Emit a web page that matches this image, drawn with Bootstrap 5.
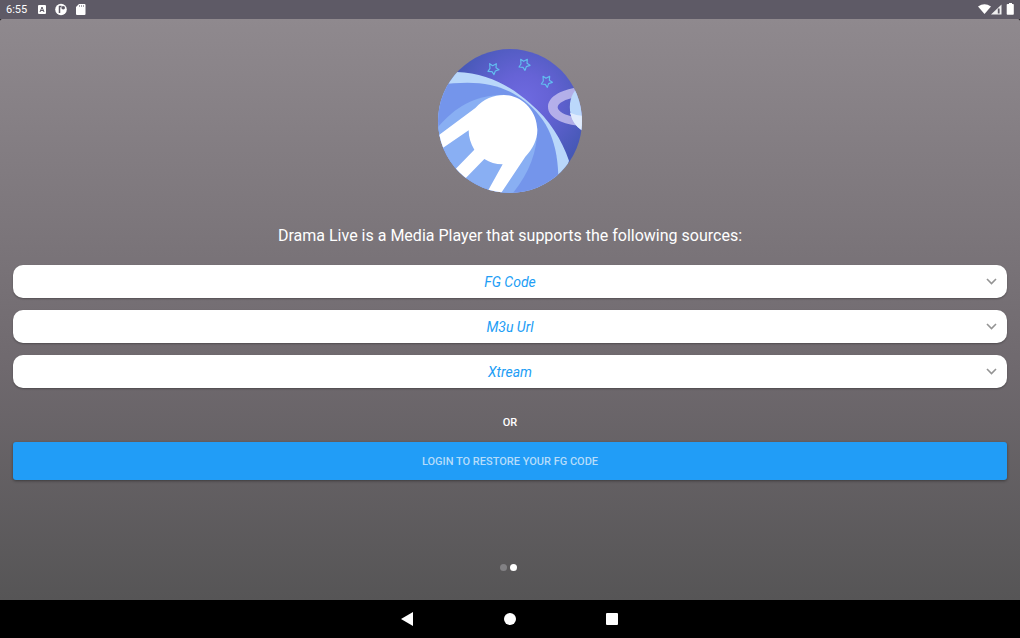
<!DOCTYPE html>
<html lang="en">
<head>
<meta charset="utf-8">
<meta name="viewport" content="width=device-width, initial-scale=1">
<title>Drama Live</title>
<link href="https://cdn.jsdelivr.net/npm/bootstrap@5.3.0/dist/css/bootstrap.min.css" rel="stylesheet">
<style>
  body { font-family: Roboto, "Liberation Sans", sans-serif; background: #000; }
  .status-bar { height: 19px; background: #5e5a66; font-size: 11px; line-height: 19px; padding: 0 5px 0 6px; }
  .screen {
    background: linear-gradient(#8f898e 0%, #6f696e 60%, #565556 100%);
    border-radius: 2px 2px 0 0;
    padding: 30px 13px 29px;
  }
  .app-logo { width: 144px; height: 144px; }
  .intro { font-size: 16px; line-height: 24px; margin: 31px 0 17px; }
  .sources { gap: 12px; }
  .source-btn {
    height: 33px; border-radius: 10px; background: #fff;
    font-size: 14px; line-height: 20px; font-style: italic; padding: 0 10px;
    box-shadow: 0 1px 2px rgba(0,0,0,.3);
    --bs-btn-color: #219df5; --bs-btn-hover-color: #1584d6; --bs-btn-hover-bg: #fff;
  }
  .source-btn svg { right: 10px; top: 10px; }
  .or-line { font-size: 11px; line-height: 16px; font-weight: 500; margin: 27px 0 11px; }
  .login-btn {
    height: 38px; border-radius: 3px; background: #219df7; color: #b5dcfa;
    font-size: 11px; line-height: 16px; font-weight: 500; padding: 2px 12px 0;
    box-shadow: 0 1px 3px rgba(0,0,0,.4);
  }
  .login-btn:hover { background: #1c90e6; color: #fff; }
  .page-dot { width: 7px; height: 7px; margin-right: 3px; background: #828184; }
  .page-dot.is-current { background: #fff; }
  .system-nav { height: 38px; gap: 82px; }
  .system-nav button { width: 20px; height: 20px; }
</style>
</head>
<body class="d-flex flex-column min-vh-100 text-white">

<header class="status-bar d-flex align-items-center justify-content-between">
  <div class="d-flex align-items-center">
    <span>6:55</span>
    <svg class="ms-2" width="52" height="13" viewBox="0 0 52 13" aria-hidden="true">
      <rect x="3" y="2" width="8" height="9" rx="1" fill="#fff"/>
      <path d="M5 9l2-5 2 5M5.700 7.500h2.600" fill="none" stroke="#5e5a66" stroke-width="1"/>
      <circle cx="26" cy="6.500" r="5.800" fill="#fff"/>
      <path d="M24.500 3v7M24 3.500h2.500" fill="none" stroke="#5e5a66" stroke-width="1.500"/>
      <circle cx="28.200" cy="4.800" r="1.800" fill="#5e5a66"/>
      <path d="M44 1h5.500a1 1 0 0 1 1 1v9a1 1 0 0 1-1 1H42a1 1 0 0 1-1-1V4z" fill="#fff"/>
      <path d="M44.500 2v2M46.500 2v2M48.500 2v2" stroke="#8d8993" stroke-width=".8"/>
    </svg>
  </div>
  <svg width="37" height="13" viewBox="0 0 37 13" aria-hidden="true">
    <path d="M0 3.500Q6.500-1 13 3.500L6.500 11z" fill="#fff"/>
    <path d="M13 11.500L23.500 1.500V11.500z" fill="#fff" opacity=".9"/>
    <path d="M20.700 5.500V10.500" stroke="#5e5a66" stroke-width="1.800"/>
    <path d="M29.500 1h1.500V0h3v1h1a.8.8 0 0 1 .8.800v9.200a.8.8 0 0 1-.8.800h-5.500a.8.8 0 0 1-.8-.800V1.800a.8.8 0 0 1 .8-.800z" fill="#fff"/>
  </svg>
</header>

<main class="screen flex-grow-1 d-flex flex-column text-center">
  <svg class="app-logo mx-auto" viewBox="24 27 432 432" role="img" aria-label="Drama Live logo">
    <defs>
      <clipPath id="disc"><circle cx="240" cy="243" r="216"/></clipPath>
      <radialGradient id="sky" gradientUnits="userSpaceOnUse" cx="280" cy="180" r="220">
        <stop offset="0" stop-color="#6e6ae0"/><stop offset=".35" stop-color="#6663d6"/><stop offset="1" stop-color="#4558b5"/>
      </radialGradient>
      <path id="star" d="M-11-16L-2-10 9-16 8-4 17 2 6 6 2 17-4 8-16 7-10-2z"/>
    </defs>
    <g clip-path="url(#disc)">
      <rect x="24" y="27" width="432" height="432" fill="url(#sky)"/>
      <path d="M20 96H80C175 98 250 145 300 190C360 240 395 300 417 362L386 470H20z" fill="#b9d7fa"/>
      <path d="M20 136C140 118 215 130 285 184C360 245 392 320 384 470H20z" fill="#7495eb"/>
      <path d="M20 266C70 205 130 165 222 164L322 265C322 340 295 405 240 470H20z" fill="#89aff3"/>
      <path d="M222 165C275 165 322 212 322 270C322 300 308 327 286 350L206 470H164L218 373C196 373 180 367 163 357L90 432 60 404 133 329C122 311 116 292 116 271L34 327 20 290 136 204C162 176 190 165 222 165z" fill="#fff"/>
      <path fill-rule="evenodd" d="M460 139C400 146 354 168 354 200C354 233 400 256 460 258zM440 172V233C405 226 383 215 383 202C383 190 405 177 440 172z" fill="#c9c3f0" opacity=".8"/>
      <path d="M460 130C405 160 407 244 460 274z" fill="#bbd8fb"/>
      <path d="M420 218Q438 226 460 228V274Q430 258 420 218z" fill="#e0ebfc"/>
      <g fill="none" stroke="#62bdf0" stroke-width="3.500" stroke-linejoin="round">
        <use href="#star" x="190" y="87"/><use href="#star" x="283" y="74"/><use href="#star" x="350" y="125"/>
      </g>
    </g>
  </svg>

  <h1 class="intro fw-normal">Drama Live is a Media Player that supports the following sources:</h1>

  <div class="sources d-grid">
    <button type="button" class="btn border-0 source-btn position-relative" aria-expanded="false">FG Code
      <svg class="position-absolute" width="12" height="12" viewBox="0 0 12 12" fill="none" stroke="#949494" stroke-width="1.600" aria-hidden="true"><path d="M2 4L6.500 8.500 11 4"/></svg>
    </button>
    <button type="button" class="btn border-0 source-btn position-relative" aria-expanded="false">M3u Url
      <svg class="position-absolute" width="12" height="12" viewBox="0 0 12 12" fill="none" stroke="#949494" stroke-width="1.600" aria-hidden="true"><path d="M2 4L6.500 8.500 11 4"/></svg>
    </button>
    <button type="button" class="btn border-0 source-btn position-relative" aria-expanded="false">Xtream
      <svg class="position-absolute" width="12" height="12" viewBox="0 0 12 12" fill="none" stroke="#949494" stroke-width="1.600" aria-hidden="true"><path d="M2 4L6.500 8.500 11 4"/></svg>
    </button>
  </div>

  <p class="or-line">OR</p>
  <button type="button" class="btn border-0 login-btn w-100">LOGIN TO RESTORE YOUR FG CODE</button>

  <div class="d-flex justify-content-center mt-auto" aria-hidden="true">
    <span class="page-dot rounded-circle"></span>
    <span class="page-dot rounded-circle is-current"></span>
  </div>
</main>

<nav class="system-nav d-flex align-items-center justify-content-center" aria-label="System">
  <button type="button" class="btn border-0 p-0 d-flex" aria-label="Back"><svg width="20" height="20" viewBox="0 0 20 20" fill="#fff"><path d="M3 10L15 3V17z"/></svg></button>
  <button type="button" class="btn border-0 p-0 d-flex" aria-label="Home"><svg width="20" height="20" viewBox="0 0 20 20" fill="#fff"><circle cx="10" cy="10" r="6"/></svg></button>
  <button type="button" class="btn border-0 p-0 d-flex" aria-label="Recents"><svg width="20" height="20" viewBox="0 0 20 20" fill="#fff"><rect x="4" y="4" width="12" height="12" rx="1"/></svg></button>
</nav>

<script src="https://cdn.jsdelivr.net/npm/bootstrap@5.3.0/dist/js/bootstrap.bundle.min.js"></script>
</body>
</html>
